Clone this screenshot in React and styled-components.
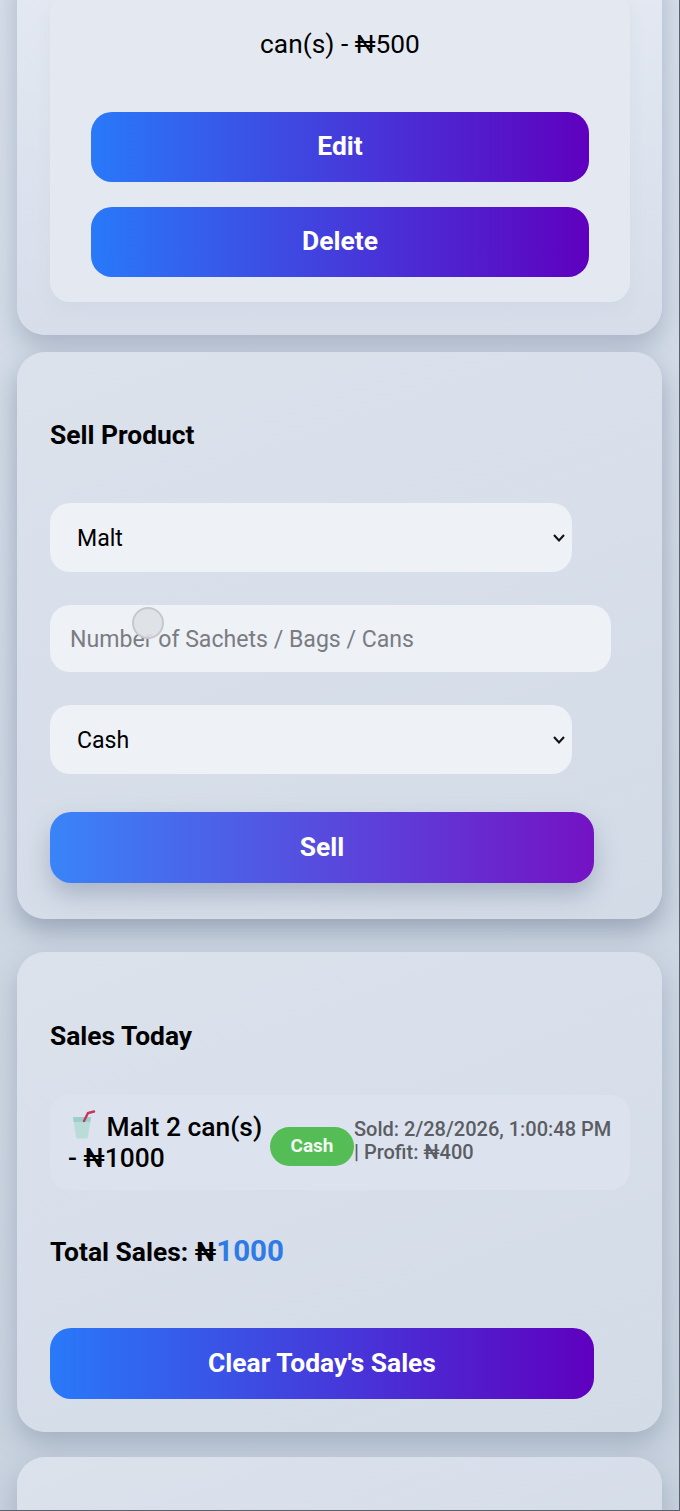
import React from "react";
import styled, { createGlobalStyle } from "styled-components";

const Global = createGlobalStyle`
  html, body { margin: 0; padding: 0; }
  body { font-family: Roboto, "Liberation Sans", sans-serif; color: #000; }
`;

const Page = styled.div`
  box-sizing: border-box;
  width: 680px;
  height: 1511px;
  overflow: hidden;
  padding: 0 17px;
  background: linear-gradient(180deg, #d6deea 0%, #c8d2df 100%);
  border-right: 1px solid #59616e;
  border-bottom: 1px solid #59616e;
`;

const Stack = styled.div`
  display: flex;
  flex-direction: column;
  margin-top: -40px;
`;

const Card = styled.section`
  box-sizing: border-box;
  width: 645px;
  height: ${p => p.$h}px;
  margin-bottom: ${p => p.$mb || 0}px;
  padding: ${p => p.$pt}px 33px 0;
  border-radius: 28px;
  background: ${p => p.$bg || "linear-gradient(160deg, #dbe2ec 0%, #d3dbe7 100%)"};
  box-shadow: 0 12px 26px rgba(110, 124, 148, ${p => p.$shadow || 0.4});
`;

const Inner = styled.div`
  box-sizing: border-box;
  width: 580px;
  height: 309px;
  padding: 0 41px;
  border-radius: 20px;
  background: #e4e9f1;
  box-shadow: 0 8px 16px rgba(170, 182, 200, 0.14);
`;

const ItemText = styled.p`
  margin: 0;
  padding: 35px 0 51px;
  font-size: 26.3px;
  line-height: 33px;
  text-align: center;
`;

const Button = styled.button`
  display: block;
  width: ${p => p.$w || 498}px;
  height: ${p => p.$ht || 71}px;
  margin: ${p => p.$mt || 0}px 0 ${p => p.$mb || 0}px;
  padding: 0 0 2px;
  border: none;
  border-radius: 21px;
  background: ${p => p.$bright
    ? "linear-gradient(90deg, #3a84f8 0%, #7412c4 100%)"
    : "linear-gradient(90deg, #2979f9 0%, #5f00bf 100%)"};
  box-shadow: ${p => p.$bright ? "0 12px 24px rgba(110, 125, 150, 0.42)" : "none"};
  color: #fff;
  font-family: Roboto, sans-serif;
  font-size: 26.4px;
  font-weight: 700;
`;

const Title = styled.h2`
  margin: 0;
  font-size: 26.4px;
  line-height: 34px;
  font-weight: 700;
`;

const chevron = "data:image/svg+xml," + encodeURIComponent(
  '<svg xmlns="http://www.w3.org/2000/svg" width="14" height="10" viewBox="0 0 14 10"><path d="M2 2l5 5.4L12 2" fill="none" stroke="#111" stroke-width="2.1"/></svg>'
);

const Select = styled.select`
  display: block;
  appearance: none;
  box-sizing: border-box;
  width: 522px;
  height: 69px;
  margin-top: ${p => p.$mt || 0}px;
  padding: 2px 30px 0 27px;
  border: none;
  border-radius: 20px;
  background: #eef1f6 url("${chevron}") no-repeat right 6px center;
  color: #000;
  font-family: Roboto, sans-serif;
  font-size: 23.1px;
`;

const FieldWrap = styled.div`
  position: relative;
  width: 561px;
  margin: 33px 0;
`;

const Input = styled.input`
  display: block;
  box-sizing: border-box;
  width: 100%;
  height: 67px;
  padding: 2px 20px 0;
  border: none;
  border-radius: 20px;
  background: #eef1f6;
  font-family: Roboto, sans-serif;
  font-size: 23.1px;
  &::placeholder { color: #7a7c82; opacity: 1; }
`;

const Touch = styled.span`
  position: absolute;
  left: 82px;
  top: 2px;
  box-sizing: border-box;
  width: 32px;
  height: 32px;
  border-radius: 50%;
  background: rgba(222, 224, 228, 0.94);
  border: 2px solid rgba(190, 194, 200, 0.8);
`;

const SaleRow = styled.div`
  box-sizing: border-box;
  display: flex;
  align-items: center;
  width: 580px;
  height: 95px;
  margin-top: 42px;
  padding: 0 18px;
  border-radius: 20px;
  background: #dde3ee;
`;

const SaleName = styled.div`
  width: 202px;
  flex: none;
  margin-top: -2px;
  font-size: 26.4px;
  line-height: 31px;
  font-weight: 500;
`;

const Cup = styled.svg`
  width: 30px;
  height: 30px;
  vertical-align: -4px;
  margin-left: 2px;
`;

const Badge = styled.span`
  flex: none;
  display: flex;
  align-items: center;
  justify-content: center;
  width: 84px;
  height: 39px;
  margin-top: 7px;
  padding-bottom: 2px;
  box-sizing: border-box;
  border-radius: 20px;
  background: #55bd55;
  color: #f1faf1;
  font-size: 19px;
  font-weight: 700;
`;

const SaleMeta = styled.div`
  flex: none;
  width: 260px;
  margin-top: -3px;
  font-size: 20px;
  line-height: 23px;
  font-weight: 500;
  color: #5a5d63;
`;

const Total = styled.p`
  margin: 43px 0 58px;
  font-size: 26.4px;
  line-height: 36px;
  font-weight: 700;
`;

const Accent = styled.span`
  font-size: 29.5px;
  color: #2f7be6;
`;

export default function App() {
  return (
    <Page>
      <Global />
      <Stack>
        <Card $h={375} $mb={17} $pt={33} $bg="linear-gradient(180deg, #e4e9f2 0%, #d7deea 100%)">
          <Inner>
            <ItemText>can(s) - ₦500</ItemText>
            <Button $ht={70} $mb={25}>Edit</Button>
            <Button $ht={70}>Delete</Button>
          </Inner>
        </Card>
        <Card $h={567} $mb={33} $pt={66} $shadow={0.55}>
          <Title>Sell Product</Title>
          <Select defaultValue="Malt" $mt={51}>
            <option>Malt</option>
          </Select>
          <FieldWrap>
            <Input placeholder="Number of Sachets / Bags / Cans" />
            <Touch />
          </FieldWrap>
          <Select defaultValue="Cash">
            <option>Cash</option>
          </Select>
          <Button $w={544} $bright $mt={38}>Sell</Button>
        </Card>
        <Card $h={480} $mb={25} $pt={67}>
          <Title>Sales Today</Title>
          <SaleRow>
            <SaleName>
              <Cup viewBox="0 0 30 30" aria-hidden="true">
                <path d="M3 7h18l-3 20q-.3 1.5-2 1.5H8q-1.7 0-2-1.5z" fill="#b9dcd9" />
                <path d="M3 7h18l-.7 5H3.7z" fill="#9ccfcb" />
                <path d="M14 11l4-8 6-1.5" fill="none" stroke="#c4365f" strokeWidth="2.4" strokeLinecap="round" />
              </Cup>{" "}
              Malt 2 can(s) - ₦1000
            </SaleName>
            <Badge>Cash</Badge>
            <SaleMeta>Sold: 2/28/2026, 1:00:48 PM | Profit: ₦400</SaleMeta>
          </SaleRow>
          <Total>Total Sales: ₦<Accent>1000</Accent></Total>
          <Button $w={544}>Clear Today's Sales</Button>
        </Card>
        <Card $h={200} $pt={33} />
      </Stack>
    </Page>
  );
}
